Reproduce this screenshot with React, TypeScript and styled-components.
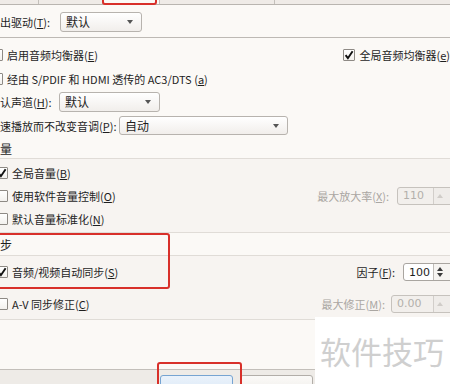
import React from "react";
import styled, { createGlobalStyle } from "styled-components";

const Global = createGlobalStyle`
  html, body { margin: 0; padding: 0; background: #fbf9f6; }
  #root { width: 450px; height: 384px; }
`;

const Page = styled.div`
  position: relative;
  width: 450px;
  height: 384px;
  overflow: hidden;
  background: #fbf9f6;
  font-family: "Noto Sans CJK SC", "Noto Sans", sans-serif;
  font-size: 11px;
  color: #1e1e1e;
  display: flex;
  flex-direction: column;
`;

const TabStrip = styled.div`
  height: 4px;
  flex: none;
  display: flex;
  background: #efebe7;
  border-bottom: 1px solid #b9b5b0;
`;

const Tab = styled.div<{ $w: number; $active?: boolean }>`
  width: ${(p) => p.$w}px;
  flex: none;
  border-right: 1px solid #c4c0bb;
  background: ${(p) => (p.$active ? "#fbf9f6" : "transparent")};
`;

const DriverRow = styled.div`
  flex: none;
  display: flex;
  align-items: center;
  padding-top: 1px;
  border-bottom: 1px solid #bdb9b4;
  box-sizing: border-box;
  height: 33px;
`;

const Section = styled.div<{ $bg?: string; $pt?: number; $pb?: number; $line?: string }>`
  flex: none;
  display: flex;
  flex-direction: column;
  background: ${(p) => p.$bg || "transparent"};
  padding-top: ${(p) => p.$pt || 0}px;
  padding-bottom: ${(p) => p.$pb || 0}px;
  border-bottom: 1px solid ${(p) => p.$line || "#e0dcd7"};
`;

const Row = styled.div<{ $h: number; $mt?: number }>`
  height: ${(p) => p.$h}px;
  margin-top: ${(p) => p.$mt || 0}px;
  flex: none;
  display: flex;
  align-items: center;
  white-space: nowrap;
`;

const Header = styled.div<{ $h: number; $line?: boolean }>`
  height: ${(p) => p.$h}px;
  flex: none;
  display: flex;
  align-items: center;
  font-size: 12px;
  border-bottom: ${(p) => (p.$line ? "1px solid #e0dcd7" : "none")};
`;

const FieldLabel = styled.span<{ $w: number }>`
  width: ${(p) => p.$w}px;
  flex: none;
`;

const Mn = styled.span`
  text-decoration: underline;
`;

const Combo = styled.div<{ $w: number; $h: number }>`
  width: ${(p) => p.$w}px;
  height: ${(p) => p.$h}px;
  box-sizing: border-box;
  flex: none;
  border: 1px solid #b7b3ae;
  border-radius: 3px;
  background: linear-gradient(#ffffff, #f1eeeb);
  display: flex;
  align-items: center;
  padding-left: 5px;
  font-size: 12px;
`;

const ComboArrow = styled.span`
  margin-left: auto;
  margin-right: 8px;
  width: 0;
  height: 0;
  border-left: 3.5px solid transparent;
  border-right: 3.5px solid transparent;
  border-top: 4px solid #555;
`;

const CheckWrap = styled.label<{ $indent: number }>`
  display: flex;
  align-items: center;
  gap: 4px;
  margin-left: ${(p) => p.$indent}px;
`;

const Box = styled.span`
  width: 12px;
  height: 12px;
  box-sizing: border-box;
  flex: none;
  border: 1px solid #8e8a85;
  border-radius: 1px;
  background: linear-gradient(#ffffff, #f3f1ee);
  display: flex;
  align-items: center;
  justify-content: center;
`;

const RightGroup = styled.div`
  margin-left: auto;
  display: flex;
  align-items: center;
`;

const SideLabel = styled.span<{ $disabled?: boolean; $gap: number }>`
  color: ${(p) => (p.$disabled ? "#aaa6a2" : "#1e1e1e")};
  margin-right: ${(p) => p.$gap}px;
`;

const Spin = styled.div<{ $w: number; $disabled?: boolean }>`
  width: ${(p) => p.$w}px;
  height: 18px;
  box-sizing: border-box;
  flex: none;
  margin-right: -3px;
  display: flex;
  border: 1px solid ${(p) => (p.$disabled ? "#c6c2bd" : "#a9a5a0")};
  border-radius: 3px;
  background: ${(p) => (p.$disabled ? "#f2efec" : "#ffffff")};
  color: ${(p) => (p.$disabled ? "#b3afab" : "#1e1e1e")};
  font-family: "DejaVu Sans", "Noto Sans", sans-serif;
  font-size: 11px;
`;

const SpinText = styled.span`
  flex: 1;
  display: flex;
  align-items: center;
  padding-left: 5px;
`;

const SpinButtons = styled.span<{ $disabled?: boolean }>`
  width: 15px;
  flex: none;
  border-left: 1px solid ${(p) => (p.$disabled ? "#d2ceca" : "#c0bcb7")};
  background: ${(p) => (p.$disabled ? "#efece9" : "#f6f4f1")};
  display: flex;
  flex-direction: column;
  align-items: flex-start;
  justify-content: center;
  gap: 2px;
  padding-left: 3px;
`;

const UpArrow = styled.span<{ $c: string }>`
  width: 0;
  height: 0;
  border-left: 3px solid transparent;
  border-right: 3px solid transparent;
  border-bottom: 4px solid ${(p) => p.$c};
`;

const DownArrow = styled.span<{ $c: string }>`
  width: 0;
  height: 0;
  border-left: 3px solid transparent;
  border-right: 3px solid transparent;
  border-top: 4px solid ${(p) => p.$c};
`;

const Filler = styled.div`
  flex: 1;
`;

const BottomBar = styled.div`
  height: 9px;
  flex: none;
  border-top: 1px solid #c3bfba;
  background: #eeebe7;
  display: flex;
  gap: 7px;
  padding: 5px 0 0 160px;
`;

const Button = styled.div<{ $primary?: boolean }>`
  width: 73px;
  height: 22px;
  flex: none;
  box-sizing: border-box;
  border: 1px solid ${(p) => (p.$primary ? "#76a4d2" : "#b2aea9")};
  border-radius: 3px;
  background: ${(p) => (p.$primary ? "linear-gradient(#eaf2fb, #d9e7f5)" : "linear-gradient(#fbfaf8, #eeebe7)")};
`;

const Highlight = styled.div<{ $l: number; $t: number; $w: number; $h: number }>`
  position: absolute;
  left: ${(p) => p.$l}px;
  top: ${(p) => p.$t}px;
  width: ${(p) => p.$w}px;
  height: ${(p) => p.$h}px;
  box-sizing: border-box;
  border: 2.5px solid #d8302a;
  border-radius: 3px;
  pointer-events: none;
`;

const Watermark = styled.div`
  position: absolute;
  left: 315px;
  top: 317px;
  width: 135px;
  height: 67px;
  background: #ffffff;
  color: #cfcfcf;
  font-family: "Noto Sans CJK SC", sans-serif;
  font-size: 31px;
  line-height: 1;
  display: flex;
  align-items: center;
  padding-left: 5px;
  box-sizing: border-box;
`;

const Check = () => (
  <svg width="10" height="10" viewBox="0 0 10 10">
    <path d="M1.6 5.2 L3.9 8.2 L8.6 1.2" fill="none" stroke="#111" strokeWidth="1.9" />
  </svg>
);

const CheckBox: React.FC<{ checked?: boolean; indent: number; children: React.ReactNode }> = ({
  checked,
  indent,
  children,
}) => (
  <CheckWrap $indent={indent}>
    <Box>{checked && <Check />}</Box>
    <span>{children}</span>
  </CheckWrap>
);

const SpinBox: React.FC<{ value: string; w: number; disabled?: boolean }> = ({ value, w, disabled }) => {
  const c = disabled ? "#d0ccc8" : "#3a3a3a";
  return (
    <Spin $w={w} $disabled={disabled}>
      <SpinText>{value}</SpinText>
      <SpinButtons $disabled={disabled}>
        <UpArrow $c={c} />
        {!disabled && <DownArrow $c={c} />}
      </SpinButtons>
    </Spin>
  );
};

export default function App() {
  return (
    <Page>
      <Global />
      <TabStrip>
        <Tab $w={38} />
        <Tab $w={63} />
        <Tab $w={56} $active />
        <Tab $w={114} />
      </TabStrip>

      <DriverRow>
        <FieldLabel $w={60}>
          出驱动(<Mn>T</Mn>):
        </FieldLabel>
        <Combo $w={82} $h={20}>
          默认
          <ComboArrow />
        </Combo>
      </DriverRow>

      <Section $pt={5}>
        <Row $h={24}>
          <CheckBox indent={-9}>
            启用音频均衡器(<Mn>E</Mn>)
          </CheckBox>
          <RightGroup>
            <CheckBox checked indent={0}>
              全局音频均衡器(<Mn>e</Mn>)
            </CheckBox>
          </RightGroup>
        </Row>
        <Row $h={23}>
          <CheckBox indent={-9}>
            经由 S/PDIF 和 HDMI 透传的 AC3/DTS (<Mn>a</Mn>)
          </CheckBox>
        </Row>
        <Row $h={23}>
          <FieldLabel $w={59}>
            认声道(<Mn>H</Mn>):
          </FieldLabel>
          <Combo $w={101} $h={20}>
            默认
            <ComboArrow />
          </Combo>
        </Row>
        <Row $h={25}>
          <FieldLabel $w={119}>
            速播放而不改变音调(<Mn>P</Mn>):
          </FieldLabel>
          <Combo $w={169} $h={19}>
            自动
            <ComboArrow />
          </Combo>
        </Row>
        <Header $h={20}>量</Header>
      </Section>

      <Section $bg="#f7f4f1" $pt={3} $pb={2}>
        <Row $h={22}>
          <CheckBox checked indent={-4}>
            全局音量(<Mn>B</Mn>)
          </CheckBox>
        </Row>
        <Row $h={23}>
          <CheckBox indent={-4}>
            使用软件音量控制(<Mn>O</Mn>)
          </CheckBox>
          <RightGroup>
            <SideLabel $disabled $gap={8}>
              最大放大率(<Mn>X</Mn>):
            </SideLabel>
            <SpinBox value="110" w={56} disabled />
          </RightGroup>
        </Row>
        <Row $h={23}>
          <CheckBox indent={-4}>
            默认音量标准化(<Mn>N</Mn>)
          </CheckBox>
        </Row>
      </Section>

      <Section>
        <Header $h={22}>步</Header>
      </Section>

      <Section $bg="#f7f4f1" $pt={3} $pb={3}>
        <Row $h={26}>
          <CheckBox checked indent={-4}>
            音频/视频自动同步(<Mn>S</Mn>)
          </CheckBox>
          <RightGroup>
            <SideLabel $gap={8}>
              因子(<Mn>F</Mn>):
            </SideLabel>
            <SpinBox value="100" w={50} />
          </RightGroup>
        </Row>
        <Row $h={25} $mt={6}>
          <CheckBox indent={-4}>
            A-V 同步修正(<Mn>C</Mn>)
          </CheckBox>
          <RightGroup>
            <SideLabel $disabled $gap={6}>
              最大修正(<Mn>M</Mn>):
            </SideLabel>
            <SpinBox value="0.00" w={62} disabled />
          </RightGroup>
        </Row>
      </Section>

      <Filler />

      <BottomBar>
        <Button $primary />
        <Button />
      </BottomBar>

      <Highlight $l={102} $t={-4} $w={55} $h={9} />
      <Highlight $l={-3} $t={233} $w={173} $h={56} />
      <Highlight $l={157} $t={362} $w={85} $h={26} />

      <Watermark>软件技巧</Watermark>
    </Page>
  );
}
